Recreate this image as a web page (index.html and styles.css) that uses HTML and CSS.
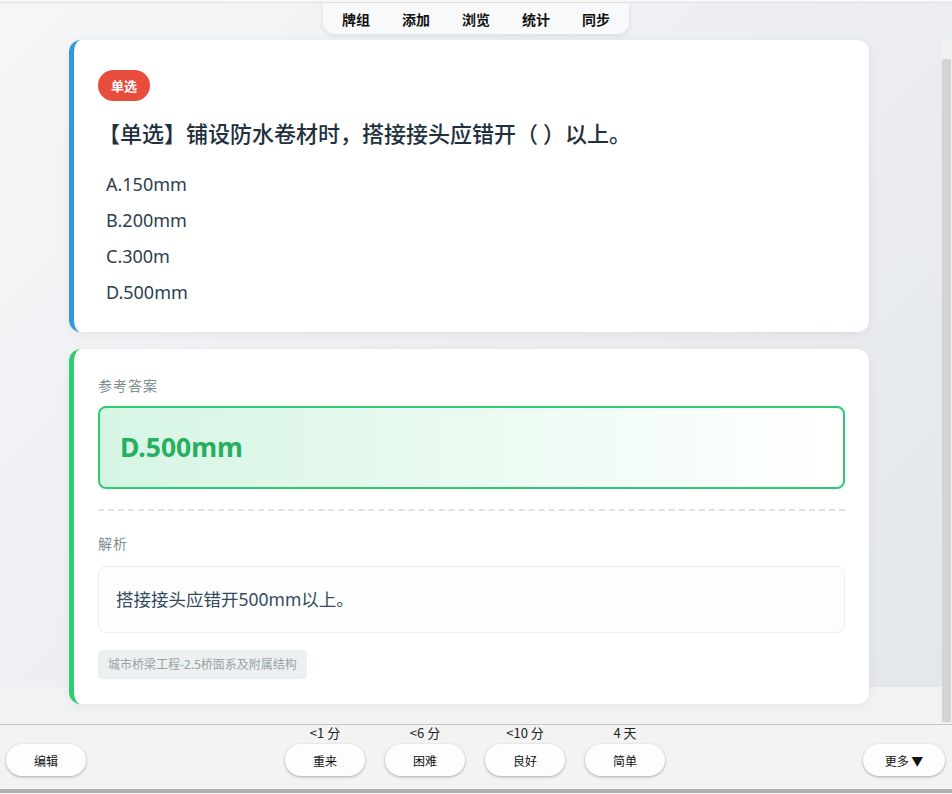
FILE: index.html
```html
<!DOCTYPE html>
<html lang="zh-CN">
<head>
    <meta charset="UTF-8">
    <meta name="viewport" content="width=device-width, initial-scale=1.0">
    <title>复习</title>
    <link rel="stylesheet" href="styles.css">
</head>
<body>
    <div class="topline"></div>
    <div class="viewport">
        <div class="page">
            <nav class="tabs">
                <span class="tab">牌组</span>
                <span class="tab">添加</span>
                <span class="tab">浏览</span>
                <span class="tab">统计</span>
                <span class="tab">同步</span>
            </nav>

            <div class="card question-card">
                <span class="badge">单选</span>
                <div class="question">【单选】铺设防水卷材时，搭接接头应错开（ ）以上。</div>
                <div class="options">
                    <div class="option">A.150mm</div>
                    <div class="option">B.200mm</div>
                    <div class="option">C.300m</div>
                    <div class="option">D.500mm</div>
                </div>
            </div>

            <div class="card answer-card">
                <div class="section-label">参考答案</div>
                <div class="answer-box">D.500mm</div>
                <div class="divider"></div>
                <div class="section-label">解析</div>
                <div class="explain-box">搭接接头应错开500mm以上。</div>
                <span class="tag">城市桥梁工程-2.5桥面系及附属结构</span>
            </div>
        </div>
        <div class="scrollbar">
            <div class="scroll-track">
                <div class="scroll-thumb"></div>
            </div>
        </div>
    </div>

    <div class="answer-bar">
        <div class="bar-left">
            <button class="bar-btn">编辑</button>
        </div>
        <div class="ease-group">
            <div class="ease">
                <span class="ease-time">&lt;1 分</span>
                <button class="bar-btn">重来</button>
            </div>
            <div class="ease">
                <span class="ease-time">&lt;6 分</span>
                <button class="bar-btn">困难</button>
            </div>
            <div class="ease">
                <span class="ease-time">&lt;10 分</span>
                <button class="bar-btn">良好</button>
            </div>
            <div class="ease">
                <span class="ease-time">4 天</span>
                <button class="bar-btn">简单</button>
            </div>
        </div>
        <div class="bar-right">
            <button class="bar-btn more-btn">更多 ▼</button>
        </div>
    </div>
    <div class="bottom-edge"></div>
</body>
</html>
```

FILE: styles.css
```css
html, body {
    margin: 0;
    padding: 0;
}
body {
    width: 952px;
    height: 794px;
    overflow: hidden;
    font-family: "Noto Sans", "Noto Sans CJK SC", sans-serif;
    background: #f3f3f3;
}
.topline {
    height: 2px;
    background: #f7f7f7;
    border-bottom: 1px solid #e0e0e0;
}
.viewport {
    display: flex;
    height: 721px;
    background:
        linear-gradient(#f0f2f4, #f0f2f4) left bottom / 100% 37px no-repeat,
        linear-gradient(135deg, #f5f6f8 0%, #e3e6ea 100%);
    overflow: hidden;
}
.page {
    flex: 1;
    display: flex;
    flex-direction: column;
    align-items: flex-start;
    padding-left: 69px;
}
.tabs {
    align-self: center;
    margin-left: -59px;
    display: flex;
    padding: 0 3px;
    height: 31px;
    align-items: center;
    background: #f8f9fa;
    border-radius: 0 0 12px 12px;
    box-shadow: 0 2px 6px rgba(0, 0, 0, 0.08);
}
.tab {
    width: 60px;
    text-align: center;
    font-size: 14px;
    font-weight: 700;
    color: #111;
}
.card {
    box-sizing: border-box;
    width: 800px;
    background: #fff;
    border-radius: 12px;
    border-left: 5px solid #3498db;
    box-shadow: 0 2px 10px rgba(0, 0, 0, 0.06);
}
.question-card {
    margin-top: 6px;
    padding: 30px 24px 21px 24px;
    height: 292px;
}
.badge {
    display: inline-block;
    background: #e74c3c;
    color: #fff;
    font-family: "Noto Sans CJK SC", sans-serif;
    font-size: 13px;
    font-weight: 700;
    line-height: 19px;
    padding: 6px 13px;
    border-radius: 16px;
}
.question {
    margin-top: 16px;
    font-family: "Noto Sans CJK SC", sans-serif;
    font-size: 22px;
    font-weight: 500;
    line-height: 30px;
    color: #22303d;
}
.options {
    margin-top: 19px;
}
.option {
    padding-left: 8px;
    font-size: 18px;
    line-height: 36px;
    color: #2c3e50;
}
.answer-card {
    margin-top: 17px;
    border-left-color: #2ecc71;
    padding: 28px 24px 25px 24px;
    flex-shrink: 0;
}
.section-label {
    font-family: "Noto Sans CJK SC", sans-serif;
    font-size: 14px;
    letter-spacing: 1px;
    line-height: 17px;
    color: #7f8c8d;
    margin-bottom: 12px;
}
.answer-box {
    border: 2px solid #2ecc71;
    border-radius: 8px;
    padding: 20px;
    background: linear-gradient(90deg, #d5f5e3 0%, #ffffff 100%);
    color: #27ae60;
    font-size: 26.5px;
    font-weight: 700;
    line-height: 39px;
}
.divider {
    margin: 20px 0 24px;
    border-top: 2px dashed #dde1e4;
}
.explain-box {
    margin-top: 14px;
    border: 1px solid #eceff1;
    border-radius: 8px;
    background: #fcfdfd;
    padding: 20px 17px;
    font-size: 17.5px;
    line-height: 25px;
    color: #34495e;
}
.tag {
    display: inline-block;
    margin-top: 17px;
    background: #ecf0f1;
    color: #95a5a6;
    font-size: 12px;
    line-height: 17px;
    padding: 6px 10px;
    border-radius: 4px;
}
.scrollbar {
    width: 10px;
    padding-top: 37px;
    display: flex;
}
.scroll-track {
    flex: 1;
    display: flex;
    flex-direction: column;
    background: #f1f1f1;
    padding-top: 19px;
    padding-bottom: 2px;
}
.scroll-thumb {
    flex: 1;
    margin-right: 1px;
    background: #d3d3d3;
    border-radius: 2px 2px 0 0;
}
.answer-bar {
    display: grid;
    grid-template-columns: 1fr auto 1fr;
    align-items: end;
    height: 65px;
    padding-bottom: 13px;
    box-sizing: border-box;
    border-top: 1px solid #c6c6c6;
    background: #f3f3f3;
    font-family: "Noto Sans CJK SC", sans-serif;
}
.bar-left {
    padding-left: 6px;
}
.bar-right {
    display: flex;
    justify-content: flex-end;
    padding-right: 7px;
}
.ease-group {
    display: flex;
    gap: 20px;
    margin-left: -2px;
}
.ease {
    display: flex;
    flex-direction: column;
    align-items: center;
    gap: 3px;
}
.ease-time {
    font-size: 13px;
    line-height: 16px;
    color: #222;
}
.bar-btn {
    width: 80px;
    height: 32px;
    border: none;
    border-radius: 16px;
    background: #fdfdfd;
    box-shadow: 0 1px 3px rgba(0, 0, 0, 0.3);
    font-family: "Noto Sans CJK SC", sans-serif;
    font-size: 12px;
    color: #111;
    padding: 0;
}
.more-btn {
    width: 82px;
}
.bottom-edge {
    height: 4px;
    background: #b0b0b0;
}
```
